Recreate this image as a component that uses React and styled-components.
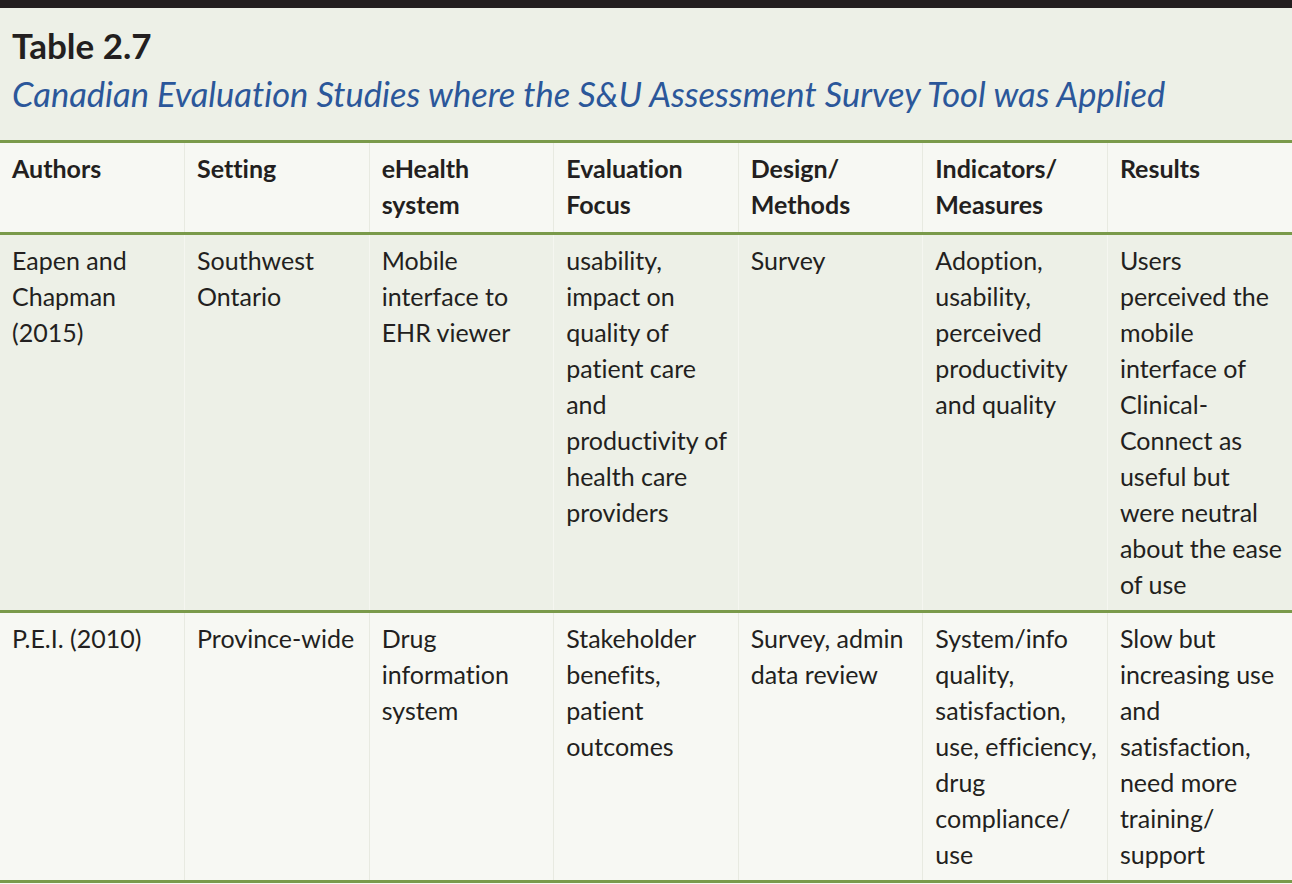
import React from 'react'
import styled, { createGlobalStyle } from 'styled-components'

const GlobalStyle = createGlobalStyle`
    html, body {
        margin: 0;
        padding: 0;
        background: #f7f8f3;
    }
    * {
        box-sizing: border-box;
    }
`

const columns = [
    ['Authors'],
    ['Setting'],
    ['eHealth', 'system'],
    ['Evaluation', 'Focus'],
    ['Design/', 'Methods'],
    ['Indicators/', 'Measures'],
    ['Results']
]

const rows = [
    [
        ['Eapen and', 'Chapman', '(2015)'],
        ['Southwest', 'Ontario'],
        ['Mobile', 'interface to', 'EHR viewer'],
        ['usability,', 'impact on', 'quality of', 'patient care', 'and', 'productivity of', 'health care', 'providers'],
        ['Survey'],
        ['Adoption,', 'usability,', 'perceived', 'productivity', 'and quality'],
        ['Users', 'perceived the', 'mobile', 'interface of', 'Clinical-', 'Connect as', 'useful but', 'were neutral', 'about the ease', 'of use']
    ],
    [
        ['P.E.I. (2010)'],
        ['Province-wide'],
        ['Drug', 'information', 'system'],
        ['Stakeholder', 'benefits,', 'patient', 'outcomes'],
        ['Survey, admin', 'data review'],
        ['System/info', 'quality,', 'satisfaction,', 'use, efficiency,', 'drug', 'compliance/', 'use'],
        ['Slow but', 'increasing use', 'and', 'satisfaction,', 'need more', 'training/', 'support']
    ]
]

const Lines = ({ lines }) => (
    <>
        {lines.map((l, i) => <Line key={i}>{l}</Line>)}
    </>
)

export default function App() {
    return (
        <Page>
            <GlobalStyle />
            <TopBar />
            <Caption>
                <TableNumber>Table 2.7</TableNumber>
                <TableTitle>Canadian Evaluation Studies where the S&amp;U Assessment Survey Tool was Applied</TableTitle>
            </Caption>
            <Table>
                <colgroup>
                    {columns.map((c, i) => <col key={i} style={{ width: `${100 / 7}%` }} />)}
                </colgroup>
                <thead>
                    <Row $light>
                        {columns.map((c, i) => (
                            <HeadCell key={i} $light>
                                <Lines lines={c} />
                            </HeadCell>
                        ))}
                    </Row>
                </thead>
                <tbody>
                    {rows.map((r, i) => (
                        <Row key={i} $light={i % 2 === 1}>
                            {r.map((cell, j) => (
                                <Cell key={j} $light={i % 2 === 1}>
                                    <Lines lines={cell} />
                                </Cell>
                            ))}
                        </Row>
                    ))}
                </tbody>
            </Table>
        </Page>
    )
}




const Page = styled.div`
    width: 1292px;
    min-height: 884px;
    background: #f7f8f3;
    font-family: Lato, "Open Sans", sans-serif;
    font-variant-ligatures: no-common-ligatures;
    color: #231f20;
`

const TopBar = styled.div`
    height: 8px;
    background: #231f20;
`

const Caption = styled.div`
    background: #edf0e7;
    padding: 16px 12px 26px;
`

const TableNumber = styled.h2`
    margin: 0;
    font-size: 35px;
    line-height: 42px;
    font-weight: 700;
    color: #231f20;
`

const TableTitle = styled.div`
    margin-top: 8px;
    font-size: 34.5px;
    line-height: 40px;
    font-style: italic;
    color: #2b579a;
`

const Table = styled.table`
    width: 100%;
    border-collapse: collapse;
    table-layout: fixed;
    border-top: 3px solid #7a9a4a;
`

const Row = styled.tr`
    background: ${p => p.$light ? '#f7f8f3' : '#edf0e7'};
    border-bottom: 3px solid #7a9a4a;
`

const Cell = styled.td`
    vertical-align: top;
    padding: 7px 4px 8px 12px;
    font-size: 25px;
    line-height: 36px;
    border-left: 1px solid ${p => p.$light ? '#e8eae1' : '#f5f6f0'};

    &:first-child {
        border-left: none;
    }
`

const HeadCell = styled(Cell).attrs({ as: 'th' })`
    text-align: left;
    font-weight: 700;
    padding-bottom: 10px;
`

const Line = styled.span`
    display: block;
    white-space: nowrap;
`
